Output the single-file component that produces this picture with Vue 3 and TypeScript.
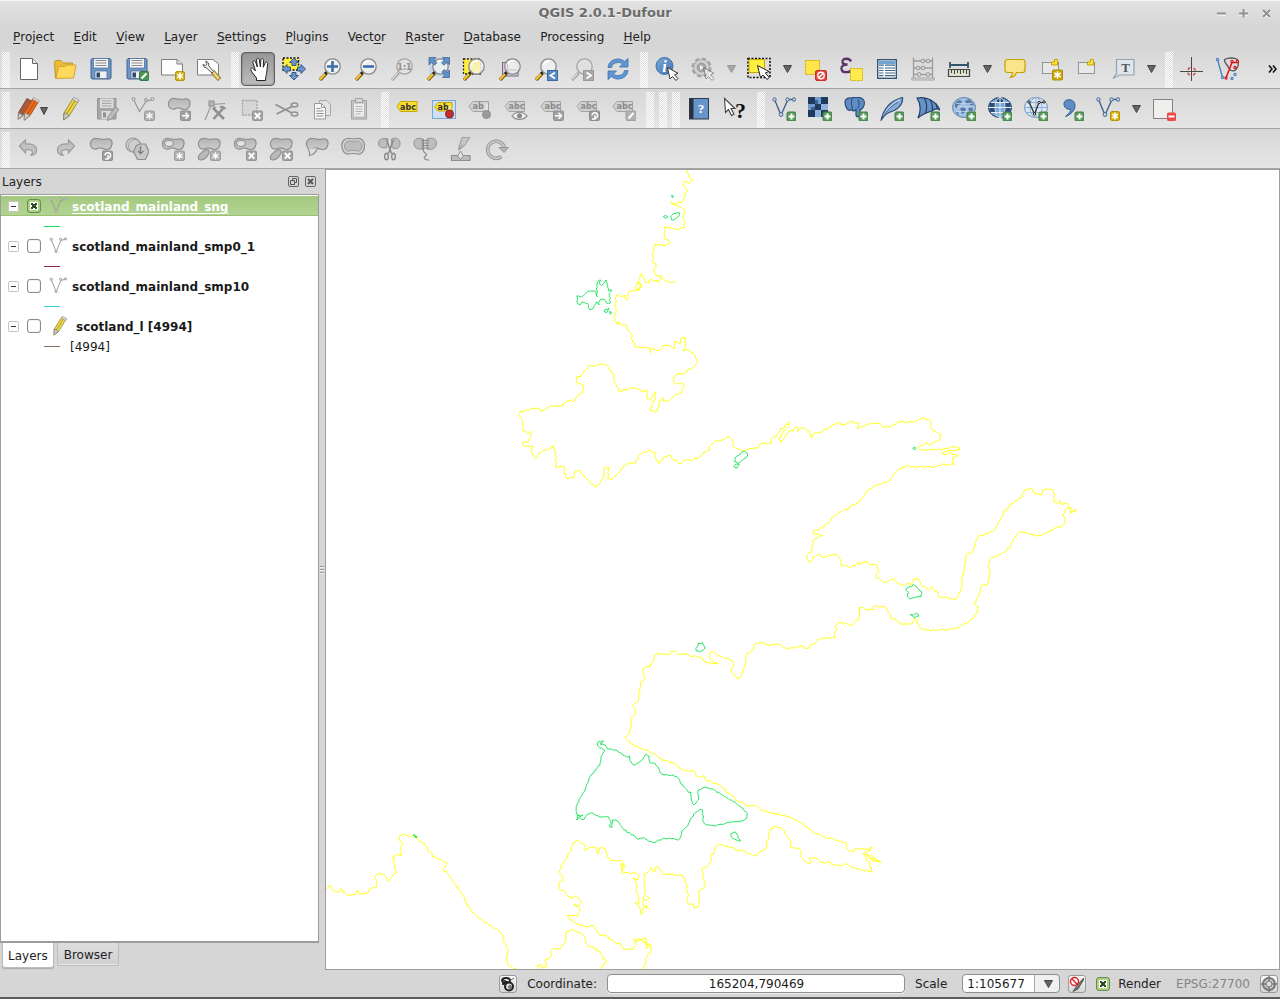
<script setup lang="ts">
import { ref } from 'vue'

interface Tool {
  kind: 'tool' | 'arrow' | 'grip'
  icon?: string
  label?: string
  active?: boolean
  off?: boolean
}

const tool = (icon: string, label: string): Tool => ({ kind: 'tool', icon, label })
const off = (icon: string, label: string): Tool => ({ kind: 'tool', icon, label, off: true })
const arrow = (label: string, disabled = false): Tool => ({ kind: 'arrow', label, off: disabled })
const grip: Tool = { kind: 'grip' }

const menus: [string, string, string][] = [
  ['', 'P', 'roject'],
  ['', 'E', 'dit'],
  ['', 'V', 'iew'],
  ['', 'L', 'ayer'],
  ['', 'S', 'ettings'],
  ['', 'P', 'lugins'],
  ['Vect', 'o', 'r'],
  ['', 'R', 'aster'],
  ['', 'D', 'atabase'],
  ['Processing', '', ''],
  ['', 'H', 'elp'],
]

const bars: { name: string; items: Tool[] }[] = [
  {
    name: 'Navigation',
    items: [
      grip,
      tool('new', 'New'),
      tool('open', 'Open'),
      tool('save', 'Save'),
      tool('save-as', 'Save As'),
      tool('composer', 'New Print Composer'),
      tool('manager', 'Composer Manager'),
      grip,
      { kind: 'tool', icon: 'hand', label: 'Pan Map', active: true },
      tool('pan-sel', 'Pan Map to Selection'),
      tool('zoom-in', 'Zoom In'),
      tool('zoom-out', 'Zoom Out'),
      off('zoom-native', 'Zoom to Native Resolution'),
      tool('zoom-full', 'Zoom Full'),
      tool('zoom-sel', 'Zoom to Selection'),
      tool('zoom-layer', 'Zoom to Layer'),
      tool('zoom-last', 'Zoom Last'),
      off('zoom-next', 'Zoom Next'),
      tool('refresh', 'Refresh'),
      grip,
      tool('identify', 'Identify Features'),
      off('action', 'Run Feature Action'),
      arrow('Feature actions', true),
      tool('select', 'Select Features'),
      arrow('Selection tools'),
      tool('deselect', 'Deselect Features'),
      tool('expression', 'Select by Expression'),
      tool('table', 'Open Attribute Table'),
      off('abacus', 'Field Calculator'),
      tool('measure', 'Measure Line'),
      arrow('Measure tools'),
      tool('tips', 'Map Tips'),
      tool('bookmark-new', 'New Bookmark'),
      tool('bookmark', 'Show Bookmarks'),
      tool('annotation', 'Text Annotation'),
      arrow('Annotation tools'),
      grip,
      tool('crosshair', 'Coordinate Capture'),
      tool('topology', 'Topology Checker'),
    ],
  },
  {
    name: 'Digitizing',
    items: [
      grip,
      { kind: 'tool', icon: 'pencils', label: 'Current Edits' },
      tool('pencil', 'Toggle Editing'),
      off('save-edits', 'Save Layer Edits'),
      off('add-feature', 'Add Feature'),
      off('move-feature', 'Move Feature'),
      off('node', 'Node Tool'),
      off('delete', 'Delete Selected'),
      off('cut', 'Cut Features'),
      off('copy', 'Copy Features'),
      off('paste', 'Paste Features'),
      grip,
      tool('label', 'Labeling'),
      tool('label-pin-on', 'Highlight Pinned Labels'),
      off('label-pin', 'Pin Labels'),
      off('label-show', 'Show Labels'),
      off('label-move', 'Move Label'),
      off('label-rotate', 'Rotate Label'),
      off('label-edit', 'Change Label'),
      grip,
      grip,
      grip,
      tool('book', 'Help Contents'),
      tool('whats', "What's This?"),
      grip,
      tool('add-vector', 'Add Vector Layer'),
      tool('add-raster', 'Add Raster Layer'),
      tool('add-postgis', 'Add PostGIS Layer'),
      tool('add-spatialite', 'Add SpatiaLite Layer'),
      tool('add-mssql', 'Add MSSQL Layer'),
      tool('add-wms', 'Add WMS Layer'),
      tool('add-wcs', 'Add WCS Layer'),
      tool('add-wfs', 'Add WFS Layer'),
      tool('add-csv', 'Add Delimited Text Layer'),
      tool('new-vector', 'New Shapefile Layer'),
      arrow('New layer types'),
      tool('remove', 'Remove Layer'),
    ],
  },
  {
    name: 'Advanced digitizing',
    items: [
      grip,
      off('undo', 'Undo'),
      off('redo', 'Redo'),
      off('rotate-feature', 'Rotate Feature'),
      off('simplify', 'Simplify Feature'),
      off('add-ring', 'Add Ring'),
      off('add-part', 'Add Part'),
      off('delete-ring', 'Delete Ring'),
      off('delete-part', 'Delete Part'),
      off('reshape', 'Reshape Features'),
      off('offset', 'Offset Curve'),
      off('split', 'Split Features'),
      off('merge', 'Merge Features'),
      off('merge-attr', 'Merge Attributes'),
      off('rotate-symbol', 'Rotate Point Symbols'),
    ],
  },
]

const layers = ref([
  { name: 'scotland_mainland_sng', on: true, current: true, icon: 'vector', color: '#17e05a', sub: '' },
  { name: 'scotland_mainland_smp0_1', on: false, current: false, icon: 'vector', color: '#8f2452', sub: '' },
  { name: 'scotland_mainland_smp10', on: false, current: false, icon: 'vector', color: '#3fc9dc', sub: '' },
  { name: 'scotland_l [4994]', on: false, current: false, icon: 'pencil', color: '#8a6a5c', sub: '[4994]' },
])

const render = ref(true)
const coordinate = ref('165204,790469')

/* Survey sheets: each holds digitised lines in thirds of a pixel from its own origin. */
interface Sheet { x: number; y: number; coast: string[]; islands: string[] }

const sheets: Sheet[] = [
  {
    x: 500, y: 165,
    coast: [
      '563,15 566,35 577,43 570,55 552,50 550,62 562,78 555,90 548,105 540,112 525,118 514,110 516,118 535,122 553,133 552,150 548,157 554,165 553,188 542,190 530,195 510,188 492,185 494,222 505,225 510,235 495,242 480,236 463,238 463,258 457,262 458,290 468,295 470,305 460,312 464,326 480,332 486,338 497,348 512,352 526,349',
      '486,330 482,335 478,352 470,345 460,350 450,344 440,354 432,350 430,335 423,325 420,340 412,350 425,368 410,375 405,368 414,352 424,360 408,378 390,378 384,385 382,405 376,402 375,390 362,395 350,390 345,402 350,410 342,425 348,440 343,455 350,475 358,470 352,478 362,478 378,480 380,493 392,503 398,512 393,520 403,533 406,546 422,549 435,546 450,552 452,565 456,552 470,556 488,550 490,540 505,541 515,545 521,553 523,528 533,533 543,535 542,520 553,515 556,545 550,557 562,553 570,560 583,568 587,580 592,592 584,603 570,612 553,625 530,629 519,640 521,652 533,657 545,653 553,660 545,685 525,690 515,700 500,710 490,708 488,698 477,710 473,738 465,742 452,737 455,720 465,706 469,680 458,690 450,706 438,698 442,675 432,680 415,672 400,670 355,680 350,665 343,650 339,625 325,608 320,598 290,600 265,605 250,618 243,635 230,635 228,652 250,660 247,685 230,695 220,710 212,706 195,714 188,724 160,722 140,730 122,738 118,730 92,730 85,738 62,738 56,750 65,760 69,797 82,803 92,798 92,815 85,830 68,833 70,842 90,845 98,843 95,862 107,882 115,870 130,855 150,850 162,840 166,860 168,908 180,903 193,905 192,920 200,940 222,935 225,920 240,916 250,932 270,953 287,966 300,955 313,925 312,908 328,908 322,940 335,943 350,928 370,903 385,895 408,893 415,875 430,862 447,856 465,862 470,885 478,896 490,877 512,872 520,885 530,885 540,897 560,885 577,886 600,875 615,862 628,855 632,840 650,826 670,825 687,815 697,825 703,848 718,852 732,858 745,852 762,850 775,848 790,832 812,836 812,822 830,815 840,798 855,780 868,770 868,782 850,800 838,825 843,833 855,815 868,798 880,798 888,785 893,800 900,790',
    ],
    islands: [
      '230,393 245,395 262,380 285,378 292,395 290,375 292,350 302,345 298,356 305,362 318,345 322,365 325,378 335,375 328,385 330,415 320,415 312,402 300,405 297,420 290,410 280,430 270,435 262,415 245,412 240,420 232,415 230,393',
      '313,435 327,430 320,443 313,440 313,435',
      '328,440 334,441 332,448 328,440',
      '515,90 521,95 517,98 515,90',
      '490,155 497,151 503,156 496,160 490,155',
      '515,165 513,155 520,146 538,143 538,152 530,158 520,165 515,165',
      '703,890 708,875 725,862 733,858 743,870 735,880 715,895 703,890',
      '702,905 710,897 718,898 710,910 702,905',
    ],
  },
  {
    x: 770, y: 400,
    coast: [
      '90,85 100,82 118,92 118,105 126,115 132,100 155,97 175,83 205,68 225,75 240,65 265,68 262,85 280,78 300,70 325,70 345,82 365,78 390,66 420,66 430,66 460,53 480,62 482,85 500,97 514,103 510,120 490,130 480,136 465,128 455,137 445,142 450,148 495,150 530,145 550,140 570,145 568,150 535,152 515,158 520,163 545,160 565,167 548,173 550,183 552,194 520,192 510,197 470,200 430,200 410,198 380,212 368,228 365,236 340,248 320,256 292,270 275,298 245,318 215,336 185,353 178,365 150,387 132,392 130,402 158,407 135,415 127,440 125,455 110,465 113,478 122,487 130,470 150,462 155,472 170,470 185,462 200,464 212,480 212,493 235,500 255,498 265,485 270,495 288,482 300,495 320,495 326,515 318,530 340,547 360,540 373,537 385,550 400,556 412,550 425,555 430,537 447,537 452,553 465,560 475,570 485,560 495,575 505,580 507,592 520,592 550,598 565,590 576,563 577,540 583,505 588,465 608,455 615,435 625,410 650,400 672,392 690,360 700,337 718,318 735,302 757,292 762,272 785,264 790,278 815,285 820,268 845,267 852,280 850,305 862,310 870,300 875,315 890,308 897,325 905,338 920,328 900,340 905,325 890,325 878,345 886,368 875,377 860,382 835,395 800,408 775,400 757,395 740,403 730,420 718,445 690,463 662,475 655,500 660,510 655,545 650,555 633,558 632,570 625,590 613,612 624,620 622,635 608,655 585,670 555,687 520,688 480,691 457,688 445,672 433,655 427,672 405,673 385,668 378,658 363,655 358,638 345,620 313,618 310,630 300,628 268,623 265,660 250,670 245,678 230,672 205,668 195,680 200,690 193,697 195,712 175,716 155,714 140,722 115,745 105,745 100,737 80,742 55,748 40,742 30,732 0,735',
    ],
    islands: [
      '428,145 434,141 438,146 432,149 428,145',
      '407,567 425,560 430,553 442,565 455,575 453,590 435,592 420,597 412,590 415,578 407,567',
      '420,643 430,645 440,640 446,648 435,653 428,648 420,643',
    ],
  },
  {
    x: 540, y: 630,
    coast: [
      '690,45 660,38 645,42 638,60 620,72 612,115 605,130 597,147 585,135 573,122 580,108 578,92 560,84 545,80 530,75 522,66 512,66 510,85 520,95 535,100 515,102 495,95 488,85 470,80 450,78 430,70 425,75 410,70 395,62 390,72 360,72 347,72 340,90 330,110 310,115 308,130 315,145 302,155 300,180 295,212 280,225 288,250 270,265 275,290 268,312 255,320 265,335 300,355 345,373 375,392 405,400 420,415 445,425 462,422 475,440 490,437 500,452 540,465 555,482 580,500 600,515 625,528 640,526 665,540 700,550 745,560 770,573 800,590 820,607 850,620 890,630 920,640 922,657 940,667 950,655 992,658 995,650 990,662 970,672 985,692 998,725 975,722 940,715 920,702 900,707 880,705 865,695 845,698 830,685 808,685 812,700 803,700 785,682 780,658 750,650 750,630 735,610 725,595 700,590 690,605 685,625 678,635 680,655 655,670 650,677 625,672 610,662 590,660 570,652 535,643 525,650 522,672 513,673 512,695 500,712 487,715 490,745 495,770 478,783 475,830 462,835 460,823 445,822 440,805 448,795 442,785 440,765 430,738 400,732 370,733 360,718 350,710 345,725 332,712 325,725 312,732 313,765 315,795 328,805 318,812 310,800 310,825 326,838 318,825 310,835 305,853 300,835 285,818 298,820 295,800 288,780 293,765 280,745 295,750 295,735 270,728 245,728 243,700 255,710 245,722 252,700 240,692 210,690 202,680 195,655 178,655 175,673 168,650 145,655 133,662 135,650 120,635 108,632 98,645 92,665 78,688 62,708 60,730 72,750 55,758 58,775 75,785 90,805 108,797 125,815 112,830 102,822 120,840 113,860 80,855 95,870 110,882 140,890 162,887 180,915 200,917 230,942 240,940 255,960 275,960 290,945 285,930 310,930 315,922 318,945 332,945 330,970 318,985 315,1000 308,1017',
      '970,672 1000,680 1022,697 1005,694 985,680 1012,690',
      '280,925 292,935 300,925 312,938 325,940 318,955 333,950',
      '48,956 60,957 75,935 78,910 95,898 125,910 135,925 145,950 160,950 185,975 200,997 185,1010 183,1020',
    ],
    islands: [
      '468,55 475,40 488,38 495,50 490,60 478,66 468,62 468,55',
      '195,362 175,350 172,338 190,332 180,342 195,345 205,357 225,360 245,370 262,382 268,378 270,392 280,405 300,395 318,372 327,378 330,398 345,400 355,412 362,430 385,436 400,435 415,445 430,470 445,487 453,487 455,512 462,525 475,510 475,480 495,472 520,477 550,497 580,515 605,533 623,550 620,565 610,573 570,577 540,583 520,587 500,585 490,575 488,540 480,538 465,550 450,570 440,590 425,603 422,620 415,630 400,625 370,625 345,637 325,633 310,622 295,628 280,615 260,607 245,590 232,572 218,570 216,592 209,590 212,572 205,560 180,562 155,548 140,555 130,570 118,562 110,570 112,556 128,555 118,560 108,550 108,530 120,505 135,480 150,440 165,420 180,405 183,378 195,362',
      '572,612 585,605 590,612 602,633 590,630 575,622 572,612',
    ],
  },
  {
    x: 326, y: 820,
    coast: [
      '0,207 14,197 22,212 38,215 45,205 52,218 75,225 90,222 92,212 100,222 120,220 133,205 150,203 152,185 145,170 160,160 175,165 187,185 200,165 210,160 205,130 200,108 215,102 227,108 224,85 230,68 220,58 222,45 235,42 250,52 265,45 280,65 297,72 305,92 325,110 350,122 362,128 352,148 372,170 385,190 410,225 425,258 455,290 490,315 515,328 530,347 535,370 543,385 545,435 560,443 572,447',
      '640,447 632,437 645,432 648,442 662,440 655,420 672,413 680,388 690,386',
    ],
    islands: ['263,43 273,52 268,53 263,43 273,50'],
  },
]

/* Adds small vertices between surveyed ones so that the shore keeps its ragged look. */
let seed = 7
function noise(): number {
  seed = (seed * 16807) % 2147483647
  return seed / 2147483647 - 0.5
}
function trace(sheet: Sheet, line: string, rough: number): string {
  const pts = line.split(' ').map((p) => p.split(',').map(Number))
  const out: string[] = []
  pts.forEach(([x, y], i) => {
    if (i > 0) {
      const [px, py] = pts[i - 1]
      const steps = Math.floor(Math.hypot(x - px, y - py) / 5)
      for (let s = 1; s < steps; s++) {
        const t = s / steps
        const jx = px + (x - px) * t + noise() * rough
        const jy = py + (y - py) * t + noise() * rough
        out.push(`${(sheet.x + jx / 3).toFixed(1)},${(sheet.y + jy / 3).toFixed(1)}`)
      }
    }
    out.push(`${(sheet.x + x / 3).toFixed(1)},${(sheet.y + y / 3).toFixed(1)}`)
  })
  return out.join(' ')
}
const coastLines = sheets.flatMap((s) => s.coast.map((l) => trace(s, l, 6)))
const islandLines = sheets.flatMap((s) => s.islands.map((l) => trace(s, l, 4)))
</script>

<template>
  <div class="window">
    <svg class="sprite" aria-hidden="true">
      <defs>
        <linearGradient id="g-blob" x1="0" y1="0" x2="0" y2="1"><stop offset="0" stop-color="#b4b4b4" /><stop offset="1" stop-color="#cdcdcd" /></linearGradient>
        <linearGradient id="g-blue" x1="0" y1="0" x2="1" y2="1"><stop offset="0" stop-color="#7fa8d6" /><stop offset="1" stop-color="#3f74b0" /></linearGradient>

        <!-- badges, drawn in the lower right corner -->
        <symbol id="b-plus" viewBox="0 0 24 24"><rect x="15" y="15" width="9" height="9" rx="1.5" fill="#5a9a5a" stroke="#3f7d45" /><path d="M19.500 16.500v6M16.500 19.500h6" stroke="#fff" stroke-width="2" /></symbol>
        <symbol id="b-star" viewBox="0 0 24 24"><rect x="14.500" y="14.500" width="9" height="9" rx="1.500" fill="#d5b011" stroke="#b8960a" /><path d="M19 15.500v7M16 17.200l6 3.600M22 17.200l-6 3.600" stroke="#fff" stroke-width="1.500" /></symbol>
        <symbol id="b-star-off" viewBox="0 0 24 24"><rect x="13.500" y="14" width="10" height="9.500" rx="1.500" fill="#b0b0b0" stroke="#9d9d9d" /><path d="M18.500 15.200v7M15.500 17l6 3.600M21.500 17l-6 3.600" stroke="#fff" stroke-width="1.300" /></symbol>
        <symbol id="b-x" viewBox="0 0 24 24"><rect x="13.500" y="14" width="10" height="9.500" rx="1" fill="#a4a4a4" stroke="#959595" /><path d="M15.700 16l5.600 5.600M21.300 16l-5.600 5.600" stroke="#fff" stroke-width="1.800" /></symbol>
        <symbol id="b-arrow" viewBox="0 0 24 24"><rect x="13.500" y="14" width="10" height="9.500" rx="1" fill="#a0a0a0" stroke="#929292" /><path d="M15 18.800h6M18.500 15.800l3 3-3 3" fill="none" stroke="#fff" stroke-width="1.500" /></symbol>
        <symbol id="b-turn" viewBox="0 0 24 24"><rect x="13.500" y="14" width="10" height="9.500" rx="1" fill="#9b9b9b" stroke="#8d8d8d" /><path d="M16 18.500a2.800 2.800 0 1 1 3 2.800M19 18v4h-3" fill="none" stroke="#fff" stroke-width="1.400" /></symbol>
        <symbol id="cursor" viewBox="0 0 24 24"><path d="M12.500 10.500l2.500 11.500 2.500-2.500 3.500 4 2-2-3.500-3.700 3.500-1.500z" fill="#fff" stroke="#333" stroke-width="1" /></symbol>

        <symbol id="lens" viewBox="0 0 24 24"><path d="M2 23l6.500-7" stroke="#6b5310" stroke-width="3.400" /><path d="M2 22.500l5.500-6" stroke="#fbc82d" stroke-width="2" /><path d="M7 17l3-3" stroke="#222" stroke-width="2.600" /><circle cx="14.500" cy="9.500" r="7.700" fill="#f1f1f1" fill-opacity=".85" stroke="#8a8a8a" stroke-width="1.300" /><path d="M9.500 8a5.500 5.500 0 0 1 6-4" stroke="#fff" stroke-width="1.500" fill="none" /></symbol>
        <symbol id="lens-off" viewBox="0 0 24 24"><path d="M2 23l6.500-7" stroke="#9b9b9b" stroke-width="3" /><path d="M2 22.500l5.500-6" stroke="#ddd" stroke-width="1.400" /><circle cx="14.500" cy="9.500" r="7.700" fill="#e0e0e0" stroke="#a5a5a5" stroke-width="1.300" /></symbol>
        <symbol id="floppy" viewBox="0 0 24 24"><path d="M3 1.500h18l1 1v18.500l-1 1H3l-1-1V2.500z" fill="#6d97c9" stroke="#3d6391" /><path d="M4.500 1.500h15v9.500h-15z" fill="#f4f4f4" stroke="#47688f" stroke-width=".7" /><path d="M6.500 3.500h11M6.500 6h11M6.500 8.500h11" stroke="#8a8a8a" /><rect x="6" y="14" width="12" height="7.500" fill="#f0f0f0" stroke="#47688f" stroke-width=".7" /><rect x="7.500" y="15.500" width="3.500" height="5" fill="#2d4a70" /></symbol>
        <symbol id="pencil" viewBox="0 0 24 24"><path d="M5 16L14 1.500l5 3L10 19l-5 3.500z" fill="#eed84e" stroke="#9a8c30" /><path d="M7.500 17L16.500 3" stroke="#b19b24" stroke-width="1.200" /><path d="M5 16l-.5 7 5.500-4-2-2.500z" fill="#c9c9c0" stroke="#77746a" stroke-width=".8" /><path d="M13.500 2.300L15 .3l5.200 3-1.300 2z" fill="#e4e4e4" stroke="#8c8c8c" stroke-width=".8" /></symbol>
        <symbol id="vector" viewBox="0 0 24 24"><path d="M3 3.500l6.500 16L16 4.500l6-1.500" fill="none" stroke="#9b9b9b" stroke-width="1.300" /><g fill="#ececec" stroke="#8e8e8e"><circle cx="3" cy="3" r="1.500" /><circle cx="9.500" cy="19.500" r="1.500" /><circle cx="15.500" cy="3" r="1.500" /><circle cx="22" cy="2.500" r="1.500" /></g></symbol>
        <symbol id="vector-blue" viewBox="0 0 24 24"><path d="M2.500 2.500l6.500 15.500 7-15.500h6.500" fill="none" stroke="#44638b" stroke-width="1.400" /><g fill="#c5daf0" stroke="#44638b"><circle cx="2.500" cy="2.500" r="1.700" /><circle cx="9" cy="17.500" r="1.900" /><circle cx="15.500" cy="2.500" r="1.700" /><circle cx="22" cy="2.500" r="1.700" /></g></symbol>
        <symbol id="blob" viewBox="0 0 24 24"><path d="M1.500 7.500C1 3 4.500 1 8 1.500c4 .6 5 1.500 9 .5 4-1 6.500 1.500 6 5-.4 3.500-2.500 6-6 5.500-3-.4-4-2-7-1.500-2 .4-2.500 1.500-4.500 1C3 11.500 1.700 10 1.500 7.500z" fill="url(#g-blob)" stroke="#8f8f8f" stroke-width="1.200" /></symbol>
        <symbol id="tag" viewBox="0 0 24 24"><path d="M1 7.500L5 2.500h15.500v10H5z" fill="#d2d2d2" stroke="#a2a2a2" /></symbol>

        <symbol id="new" viewBox="0 0 24 24"><path d="M3.500 1.500h12l5 5v16h-17z" fill="#fff" stroke="#666" /><path d="M15.500 1.500v5h5" fill="#e6e6e6" stroke="#666" /></symbol>
        <symbol id="open" viewBox="0 0 24 24"><path d="M2.500 21.500L1.500 4.500l1-1H8l2 2.500h9.500v3" fill="#e9bd35" stroke="#c4952a" /><path d="M3 21.500L5.500 9.500H12l1.500-1.500h9.500L20.500 21z" fill="#ffd95b" stroke="#d3a233" /></symbol>
        <symbol id="save" viewBox="0 0 24 24"><use href="#floppy" /></symbol>
        <symbol id="save-as" viewBox="0 0 24 24"><use href="#floppy" /><rect x="14.500" y="14.500" width="9.500" height="9" rx="1.500" fill="#4c9553" stroke="#397a40" /><path d="M16.500 21.500l5-5" stroke="#fff" stroke-width="2.200" /></symbol>
        <symbol id="composer" viewBox="0 0 24 24"><path d="M.5 2.500H16l5.500 4.500v11H.5z" fill="#fdfdfd" stroke="#7d7d7d" /><path d="M16 2.500V7h5.500" fill="#e5e5e5" stroke="#7d7d7d" /><use href="#b-star" /></symbol>
        <symbol id="manager" viewBox="0 0 24 24"><path d="M.5 2.500H16l5.500 4.500v11H.5z" fill="#fdfdfd" stroke="#7d7d7d" /><path d="M15.500 14.500l7 8" stroke="#80681c" stroke-width="4.500" /><path d="M15.500 14.500l6.500 7.500" stroke="#ecd27a" stroke-width="2.800" /><path d="M9 10.500l6 5.500 1.500-1.500-5-6c.8-2-.5-4-3-4l1.500 2.500-1.500 1.500L6 7.500c0 2 1.500 3.200 3 3z" fill="#eee" stroke="#444" stroke-width=".9" /></symbol>
        <symbol id="hand" viewBox="0 0 24 24"><path d="M10.500 23.500v-2.500L6.500 16 4.800 12.800C4.300 10.800 6.300 10.500 7.500 12l2 2L7 5.800C6.500 3.600 9 3 9.600 5l1.700 5L10.600 3c-.2-2.200 2.500-2.400 2.800-.2l.9 7L14.900 3c.2-2 2.600-1.800 2.600.2l-.2 7.100L19 6.200c.6-1.800 2.900-1.300 2.600.6L20.900 14c-.3 3.500-1.400 5-1.400 9.500z" fill="#fff" stroke="#222" stroke-width="1" /></symbol>
        <symbol id="pan-sel" viewBox="0 0 24 24"><rect x="1" y="1" width="15.500" height="12" fill="#ffef3a" stroke="#111" stroke-width="1.400" stroke-dasharray="2 1.500" /><path d="M12 1l4.500 4.500H14v3h-4v-3H7.500zM12 23l4.500-4.500H14v-3h-4v3H7.500zM.5 12L5 7.500V10h3.500v4H5v2.500zM23.500 12L19 7.500V10h-3.500v4H19v2.500z" fill="#6c96cb" stroke="#284f80" stroke-width=".9" /></symbol>
        <symbol id="zoom-in" viewBox="0 0 24 24"><use href="#lens" /><path d="M14.500 4v11M9 9.500h11" stroke="#3e6ea8" stroke-width="2.600" /></symbol>
        <symbol id="zoom-out" viewBox="0 0 24 24"><use href="#lens" /><path d="M9 9.500h11" stroke="#3e6ea8" stroke-width="2.600" /></symbol>
        <symbol id="zoom-native" viewBox="0 0 24 24"><use href="#lens-off" /><text x="14.500" y="12.500" class="tiny" text-anchor="middle" fill="#8f8f8f">1:1</text></symbol>
        <symbol id="zoom-full" viewBox="0 0 24 24"><rect x="3.500" y="1" width="19.500" height="18.500" fill="#c4d5e8" /><use href="#lens" /><path d="M3 .5h7L8 2.800l3 3-2.500 2.500-3-3L3 8zM23.500.500h-7L18.500 2.800l-3 3L18 8.300l3-3 2.500 2.500zM23.500 20.500h-7l2.300-2.500-3-3 2.500-2.500 3 3 2.200-2.500z" fill="#5e8fc6" stroke="#34608f" stroke-width=".7" /></symbol>
        <symbol id="zoom-sel" viewBox="0 0 24 24"><rect x="1.500" y="2" width="17" height="15" fill="#ffee3d" stroke="#222" stroke-width="1.300" stroke-dasharray="2 1.500" /><use href="#lens" /><rect x="11" y="5" width="7" height="9" fill="#fbf3a0" opacity=".8" /></symbol>
        <symbol id="zoom-layer" viewBox="0 0 24 24"><rect x="4.500" y="5.500" width="15.500" height="13.500" fill="#d7c8dc" stroke="#7d6a86" /><use href="#lens" /><path d="M9.500 6.500v6.500h9" fill="none" stroke="#c8b8ce" /></symbol>
        <symbol id="zoom-last" viewBox="0 0 24 24"><use href="#lens" /><rect x="13.500" y="13.500" width="10" height="10" fill="#5b8bc4" stroke="#3c699f" /><path d="M21 15.500l-4.500 3 4.500 3" fill="none" stroke="#fff" stroke-width="1.800" /></symbol>
        <symbol id="zoom-next" viewBox="0 0 24 24"><use href="#lens-off" /><rect x="13.500" y="13.500" width="10" height="10" fill="#a8a8a8" stroke="#999" /><path d="M16.500 15.500l4.500 3-4.500 3" fill="none" stroke="#fff" stroke-width="1.800" /></symbol>
        <symbol id="refresh" viewBox="0 0 24 24"><path d="M2 10.500C2.500 5 7 2 12 2c3 0 5 1 6.500 2.500L22 1.500V10h-8.500l3-3C15.500 6 14 5.500 12 5.500c-3.500 0-6 2-6.500 5z" fill="#5f95d2" stroke="#3a71ad" stroke-width=".8" /><path d="M22 13.500C21.500 19 17 22 12 22c-3 0-5-1-6.500-2.500L2 22.500V14h8.500l-3 3c1 1 2.500 1.500 4.500 1.500 3.500 0 6-2 6.500-5z" fill="#5f95d2" stroke="#3a71ad" stroke-width=".8" /></symbol>
        <symbol id="identify" viewBox="0 0 24 24"><circle cx="9.500" cy="9" r="8.500" fill="url(#g-blue)" stroke="#3e73ae" /><text x="9.500" y="14.500" class="serif-i" text-anchor="middle" fill="#fff">i</text><use href="#cursor" /></symbol>
        <symbol id="action" viewBox="0 0 24 24"><circle cx="10.500" cy="10.500" r="8.800" fill="none" stroke="#a3a3a3" stroke-width="2.600" stroke-dasharray="4.500 2.400" /><circle cx="10.500" cy="10.500" r="7.800" fill="#d3d3d3" stroke="#a6a6a6" /><circle cx="10.500" cy="10.500" r="4.500" fill="#a8a8a8" stroke="#999" /><path d="M9 8l4 2.500L9 13z" fill="#eee" /><g opacity=".45"><use href="#cursor" /></g></symbol>
        <symbol id="select" viewBox="0 0 24 24"><rect x="1" y="1.500" width="22" height="19" fill="#dedede" stroke="#111" stroke-width="1.600" stroke-dasharray="2 1.500" /><path d="M2 2.500h15.500v13H2z" fill="#ffef3e" stroke="#c9a500" /><path d="M10.500 8.500l3 12 2.500-2.500 4 4.500 2.300-2-4-4.500 3.700-1.500z" fill="#fff" stroke="#222" /></symbol>
        <symbol id="deselect" viewBox="0 0 24 24"><rect x="2.500" y="3.500" width="14" height="14" fill="#ffe64b" stroke="#d2a800" stroke-dasharray="2 1" /><rect x="12.500" y="13.500" width="11" height="10" rx="1.500" fill="#e8433f" stroke="#c92d2d" /><circle cx="18" cy="18.500" r="3.200" fill="none" stroke="#fff" stroke-width="1.400" /><path d="M16 20.500l4-4" stroke="#fff" stroke-width="1.400" /></symbol>
        <symbol id="expression" viewBox="0 0 24 24"><path d="M12 4.500C10.500.500 3 1 3.500 5c.3 2 2.500 2.700 5 2.500C4.500 7.500 2 9 2.500 12c.6 4.500 9 4 10.500 0" fill="none" stroke="#5a3365" stroke-width="2.300" /><rect x="11.500" y="11.500" width="12" height="12" fill="#ffeb4e" stroke="#d7b000" stroke-dasharray="2 1" /></symbol>
        <symbol id="table" viewBox="0 0 24 24"><rect x="2.700" y="2.700" width="18.600" height="18.600" fill="#fff" stroke="#35546f" stroke-width="1.400" /><path d="M3.500 4h17v3h-17z" fill="#6fa5d6" /><path d="M4 8.200h5M10 8.200h10M4 11h4.500M10 11h10M4 13.500h4.500M10 13.500h10M4 16h4.500M10 16h10M4 18.700h4.500M10 18.700h10" stroke="#3f6689" stroke-width="1.200" /></symbol>
        <symbol id="abacus" viewBox="0 0 24 24"><path d="M2.500.5v21M21.500.5v21M2.500 4h19M2.500 11h19M2.500 17.500h19" stroke="#9c9c9c" fill="none" stroke-width="1.300" /><path d="M.8 21h22.400v2H.8z" fill="#ddd" stroke="#a2a2a2" /><g fill="#d7d7d7" stroke="#979797"><circle cx="12" cy="4" r="1.900" /><circle cx="17" cy="4" r="1.900" /><circle cx="7" cy="11" r="1.900" /><circle cx="12" cy="11" r="1.900" /><circle cx="8" cy="17.500" r="1.900" /><circle cx="17" cy="17.500" r="1.900" /></g></symbol>
        <symbol id="measure" viewBox="0 0 24 24"><path d="M3 8h18M3 5v6M21 5v6" stroke="#33536f" stroke-width="1.800" /><path d="M1.500 12.500h21v7h-21z" fill="#dedfca" stroke="#444" stroke-width="1.200" /><path d="M4.500 13v3M7.500 13v4M10.500 13v3M13.500 13v4M16.500 13v3M19.500 13v4" stroke="#444" /></symbol>
        <symbol id="tips" viewBox="0 0 24 24"><path d="M4.500 2.500h15q2.500 0 2.500 2.500v8q0 2.500-2.500 2.500h-6c-1 3-3 4.500-6 5 1.500-1.500 2-3 2-5h-5Q2 15.500 2 13V5q0-2.500 2.500-2.500z" fill="#f9e68c" stroke="#c9a002" stroke-width="1.200" /></symbol>
        <symbol id="bookmark" viewBox="0 0 24 24"><rect x="3.500" y="5.500" width="16" height="11" fill="#e8e8e8" stroke="#444" stroke-dasharray="1 1" /><path d="M12.500 5V8h6V2.500h-3V5z" fill="#ffe03c" stroke="#c9a100" /></symbol>
        <symbol id="bookmark-new" viewBox="0 0 24 24"><use href="#bookmark" /><rect x="13.500" y="13" width="10" height="10" rx="1" fill="#cba60b" stroke="#b08e00" /><path d="M18.500 14.300v7.400M15.300 16l6.400 4M21.700 16l-6.400 4" stroke="#fff" stroke-width="1.500" /></symbol>
        <symbol id="annotation" viewBox="0 0 24 24"><path d="M5.500 2.500H23v15.500H8.500L2 21.500l3.500-5z" fill="#dde5ee" stroke="#9aa0a8" stroke-width="1.200" /><text x="14.500" y="14.500" class="serif-t" text-anchor="middle" fill="#555">T</text></symbol>
        <symbol id="crosshair" viewBox="0 0 24 24"><path d="M11.500 0v24M0 14.500h23" stroke="#4a4a45" /><circle cx="11.500" cy="14.500" r="4" fill="none" stroke="#c33" stroke-width="1.300" stroke-dasharray="3 3.280" stroke-dashoffset="4.640" /></symbol>
        <symbol id="topology" viewBox="0 0 24 24"><path d="M1.500 2.500l5 18" stroke="#4a82c3" stroke-width="1.400" /><path d="M8.500 2.500c4-2 10-2 13 0 1.500 4 .5 8-1.500 10-3 2.500-6 1.500-7.500-2S8 6 8.500 2.500z" fill="none" stroke="#555" stroke-width="1.300" /><path d="M10 21l6-15.500h5" fill="none" stroke="#d11" stroke-width="1.500" /><g fill="#e8e8e8" stroke-width="1.200"><g stroke="#d11"><circle cx="10" cy="21" r="1.100" /><circle cx="16" cy="4.500" r="1.100" /><circle cx="21.500" cy="4.500" r="1.100" /><circle cx="19" cy="10.500" r="1.100" /></g><g stroke="#4a82c3"><circle cx="1.500" cy="2.500" r="1.100" /><circle cx="6.500" cy="20.500" r="1.100" /><circle cx="19" cy="17.500" r="1.100" /><circle cx="16" cy="21.500" r="1.100" /></g></g></symbol>

        <symbol id="pencils" viewBox="0 0 24 24"><path d="M2.500 15.500L11 1.500l4.500 2.500L7 18.500l-4 3.500z" fill="#a95a3b" stroke="#82503a" /><path d="M2.500 15.500l-.5 7 5-4z" fill="#cfcac4" stroke="#777" stroke-width=".8" /><path d="M8.500 15.500L17 1.500l5.500 3L14 18.500l-5 4z" fill="#e96a1c" stroke="#ab5223" /><path d="M11.500 17L20 3" stroke="#b94a10" /><path d="M8.500 15.500l-.5 8 6-5z" fill="#cfcac4" stroke="#777" stroke-width=".8" /><path d="M16.500 2l1-1.500 5.800 3.200-1 1.800z" fill="#e0e0e0" stroke="#999" stroke-width=".7" /></symbol>
        <symbol id="save-edits" viewBox="0 0 24 24"><path d="M2.500 1.500h18.500V22H2.500z" fill="#a7a7a7" stroke="#959595" /><path d="M5 1.500h13.500v9.500H5z" fill="#dcdcdc" /><path d="M7 4h9.500M7 6.500h9.500M7 9h9.500" stroke="#a5a5a5" /><rect x="6.500" y="14" width="10" height="8" fill="#dcdcdc" /><rect x="8" y="15.500" width="3" height="5" fill="#929292" /><path d="M13 19.500l7.500-9.500 3.500 2.500-7.500 9.500-4 1.500z" fill="#bdbdbd" stroke="#929292" /></symbol>
        <symbol id="add-feature" viewBox="0 0 24 24"><path d="M2.500 2.500l6 12 6.500-10 6.500-2" fill="none" stroke="#999" stroke-width="1.300" /><g fill="#ddd" stroke="#949494"><circle cx="2.500" cy="2" r="1.500" /><circle cx="15" cy="3" r="1.500" /><circle cx="21.500" cy="2" r="1.500" /></g><use href="#b-star-off" /></symbol>
        <symbol id="move-feature" viewBox="0 0 24 24"><use href="#blob" /><use href="#b-arrow" /></symbol>
        <symbol id="node" viewBox="0 0 24 24"><path d="M2 23L8.500 7.500 22 6.500" fill="none" stroke="#999" stroke-width="1.200" /><rect x="6" y="4" width="5" height="5" fill="#b5b5b5" stroke="#8e8e8e" /><path d="M11 12l10 10M20.500 11L10.500 22" stroke="#909090" stroke-width="2.600" /><path d="M17 10.500c2-1.500 4-.5 5.500 1.500M9.500 12.500l3-2.500" stroke="#909090" stroke-width="2" fill="none" /></symbol>
        <symbol id="delete" viewBox="0 0 24 24"><rect x="3.500" y="3.500" width="14.500" height="14.500" fill="#d6d6d6" stroke="#a5a5a5" stroke-width="1.300" stroke-dasharray="2 1" /><use href="#b-x" /></symbol>
        <symbol id="cut" viewBox="0 0 24 24"><path d="M.5 7.500L17 16M1.500 17L18 9" stroke="#909090" stroke-width="1.700" /><ellipse cx="19.500" cy="8" rx="3.200" ry="2" fill="none" stroke="#909090" stroke-width="1.500" /><ellipse cx="19.500" cy="17" rx="3.200" ry="2" fill="none" stroke="#909090" stroke-width="1.500" /></symbol>
        <symbol id="copy" viewBox="0 0 24 24"><path d="M8.500 3.500h7l4 4v11h-11z" fill="#e3e3e3" stroke="#a7a7a7" /><path d="M3.500 6.500h7l4 4v11.500h-11z" fill="#f6f6f6" stroke="#9a9a9a" /><path d="M10.500 6.500v4h4" fill="none" stroke="#9a9a9a" /><path d="M5.500 11.500h4M5.500 14h7M5.500 16.500h7M5.500 19h7" stroke="#909090" /></symbol>
        <symbol id="paste" viewBox="0 0 24 24"><rect x="4.500" y="3.500" width="15" height="18.500" fill="#c6c6c6" stroke="#a2a2a2" /><rect x="6.500" y="6" width="11" height="14" fill="#eee" stroke="#b5b5b5" /><path d="M8.500 1.500h7v4h-7z" fill="#d4d4d4" stroke="#a2a2a2" /><path d="M8.500 9.500h7M8.500 12h7M8.500 14.500h7M8.500 17h5" stroke="#b0b0b0" /></symbol>
        <symbol id="label" viewBox="0 0 24 24"><path d="M1 9.500L4.500 4.500h16.500v10H4.500z" fill="#f8de2c" stroke="#c9a70a" /><text x="12" y="12.500" class="tiny" text-anchor="middle" fill="#333">abc</text></symbol>
        <symbol id="label-pin-on" viewBox="0 0 24 24"><rect x=".5" y="3.500" width="23" height="18" fill="#cfe0f2" stroke="#7ba6d8" /><path d="M2.500 10L6 5.500h14v8.500H6z" fill="#f8de2c" stroke="#c9a70a" /><text x="5.500" y="12.500" class="tiny" fill="#333">ab</text><path d="M17.500 9.500v7" stroke="#eee" stroke-width="2" /><circle cx="17.500" cy="17" r="4" fill="#bd2f2f" stroke="#8e2222" /></symbol>
        <symbol id="label-pin" viewBox="0 0 24 24"><use href="#tag" y="2" /><text x="4.500" y="12" class="tiny" fill="#8a8a8a">ab</text><path d="M18.500 7v9" stroke="#e8e8e8" stroke-width="2" /><circle cx="18.500" cy="17.500" r="4" fill="#9b9b9b" stroke="#8c8c8c" /></symbol>
        <symbol id="label-show" viewBox="0 0 24 24"><use href="#tag" y="2" /><text x="12.500" y="12" class="tiny" text-anchor="middle" fill="#8a8a8a">abc</text><path d="M8 19c4-5 11-5 15 0-4 4.500-11 4.500-15 0z" fill="#eee" stroke="#8a8a8a" stroke-width="1.200" /><circle cx="15.500" cy="18.800" r="2.500" fill="#8a8a8a" /></symbol>
        <symbol id="label-move" viewBox="0 0 24 24"><use href="#tag" y="2" /><text x="12.500" y="12" class="tiny" text-anchor="middle" fill="#8a8a8a">abc</text><use href="#b-arrow" /></symbol>
        <symbol id="label-rotate" viewBox="0 0 24 24"><use href="#tag" y="2" /><text x="12.500" y="12" class="tiny" text-anchor="middle" fill="#8a8a8a">abc</text><use href="#b-turn" /></symbol>
        <symbol id="label-edit" viewBox="0 0 24 24"><use href="#tag" y="2" /><text x="12.500" y="12" class="tiny" text-anchor="middle" fill="#8a8a8a">abc</text><rect x="14" y="14" width="10" height="9.500" rx="1" fill="#b2b2b2" stroke="#a0a0a0" /><path d="M16.500 21.500l5-5.500" stroke="#fff" stroke-width="2" /></symbol>
        <symbol id="book" viewBox="0 0 24 24"><rect x="2.500" y="1.500" width="19" height="20.500" fill="#6895c9" stroke="#2f3c50" /><path d="M2.500 1.500H6.500V22h-4z" fill="#28323f" /><text x="14" y="16" class="serif-t" text-anchor="middle" fill="#fff">?</text></symbol>
        <symbol id="whats" viewBox="0 0 24 24"><path d="M1.500 1.500l1 14 3-3 3 6 2.500-1.200-3-5.800h4z" fill="#fff" stroke="#444" stroke-width="1.100" /><text x="17.500" y="20.500" class="ask" text-anchor="middle" fill="#111">?</text></symbol>
        <symbol id="add-vector" viewBox="0 0 24 24"><use href="#vector-blue" /><use href="#b-plus" /></symbol>
        <symbol id="add-raster" viewBox="0 0 24 24"><rect x="0" y="0" width="20" height="20" fill="#6f9bcf" /><path d="M0 0h7v7H0zM13 0h7v7h-7zM7 7h6v6H7zM0 13h7v7H0zM13 13h7v7h-7z" fill="#203a5e" /><path d="M13 7h7v6h-7zM7 13h6v7H7z" fill="#8fb3dd" /><path d="M7 3h3v4H7zM3 13h4v-3H3z" fill="#3c6496" /><use href="#b-plus" /></symbol>
        <symbol id="add-postgis" viewBox="0 0 24 24"><path d="M1 5c0-3 3-4.500 6-4 3-1 9-1 11 .5 2.500 1.500 3 5 1.500 8-.7 1.500-2 3-3.500 3v5c0 3-4 3-4 0v-5l-2 1.500c-2 0-2-1-2-2-1.500 2-4 2-5.500-1S1 8 1 5z" fill="#5f8cc2" stroke="#27497a" stroke-width="1.200" /><path d="M8 2c-1 3-1 6 .5 9M14 2.500c1.500 3 1.500 6 0 8.500" fill="none" stroke="#27497a" /><use href="#b-plus" /></symbol>
        <symbol id="add-spatialite" viewBox="0 0 24 24"><path d="M1 23.500C3 14 9 4 22.500.5 23 6 20 12 9 15.500c-4 2-6 4.500-8 8z" fill="#86abd9" stroke="#2e5078" stroke-width="1.200" /><path d="M3 19C7 12 13 6 20 2.500" stroke="#dce8f5" fill="none" /><path d="M1 23.500C5 15 10 10 18 5" stroke="#2e5078" fill="none" stroke-width=".8" /><use href="#b-plus" /></symbol>
        <symbol id="add-mssql" viewBox="0 0 24 24"><path d="M1 1c8-1.500 18 1.500 23 12-3-2-6-1-8 1-5 1.500-10 3-14 7C5 15 5 7 1 1z" fill="#6792c6" stroke="#1f3f66" stroke-width="1.200" /><path d="M8 1c3 4 3.500 9 1.500 15.500M14 3c2.500 3.500 3 7 2 11M19.500 6c1.200 2 1.700 4 1.500 6" fill="none" stroke="#1f3f66" stroke-width="1.200" /><use href="#b-plus" /></symbol>
        <symbol id="add-wms" viewBox="0 0 24 24"><ellipse cx="12" cy="10.500" rx="11.500" ry="10" fill="#a3c1e4" stroke="#5e82ab" /><path d="M3 6l4-3 3 1-1 3-3 1-1 3-2-1zM13 4l4-2 3 3 2 3-3 .5-2-2-3 1zM8 11l4-1 2 2-2 4-2 1zM16 11l4-1 1 3-3 3zM4 14l2 1 1 3-2-1z" fill="#567ba8" /><path d="M5 10h15M4 6.500h16M4 14.500h16" stroke="#cfe0f2" stroke-width=".7" /><use href="#b-plus" /></symbol>
        <symbol id="add-wcs" viewBox="0 0 24 24"><ellipse cx="12" cy="10.500" rx="11.500" ry="10" fill="#7ba6d8" stroke="#1f3a5c" /><path d="M1.500 6h6.500v9H1.500zM16 6h6.500v9H16zM8 .8h8V6H8z" fill="#2c4f7e" /><path d="M.5 10.500h23M3 5.500h18M3 15.500h18" stroke="#e3edf7" /><ellipse cx="12" cy="10.500" rx="5" ry="10" fill="none" stroke="#e3edf7" /><path d="M12 .5v20" stroke="#e3edf7" /><use href="#b-plus" /></symbol>
        <symbol id="add-wfs" viewBox="0 0 24 24"><ellipse cx="12" cy="10.500" rx="11.500" ry="10" fill="#dce7f3" stroke="#6b95c6" /><path d="M.5 10.500h23M3 5.500h18M3 15.500h18M12 .5v20" stroke="#8fb0d6" /><ellipse cx="12" cy="10.500" rx="6" ry="10" fill="none" stroke="#8fb0d6" /><path d="M5 5l5.500 12L15 5.500h5" fill="none" stroke="#222" stroke-width="1.200" /><g fill="#fff" stroke="#222"><circle cx="5" cy="5" r="1.200" /><circle cx="10.500" cy="17" r="1.200" /><circle cx="15" cy="5.500" r="1.200" /><circle cx="20" cy="5" r="1.200" /></g><use href="#b-plus" /></symbol>
        <symbol id="add-csv" viewBox="0 0 24 24"><path d="M4 7c0-6 11-6 11 1.500 0 5-4 9-9.500 11C9 16.500 11 14 10.500 12 7 13 4 10.500 4 7z" fill="#5d8dc6" stroke="#315a8e" /><use href="#b-plus" /></symbol>
        <symbol id="new-vector" viewBox="0 0 24 24"><use href="#vector-blue" /><use href="#b-star" /></symbol>
        <symbol id="remove" viewBox="0 0 24 24"><rect x="1.500" y="2.500" width="19" height="19" fill="#efefed" stroke="#838380" /><rect x="15" y="15.500" width="9" height="8.500" rx="1.500" fill="#ee4b48" /><path d="M16.500 19.500h6" stroke="#fff" stroke-width="2" /></symbol>

        <symbol id="undo" viewBox="0 0 24 24"><path d="M2.500 9l6-6v4c6-.5 11.500 1 11 7-.3 2.500-2.500 4-6 4.500 2-1.500 2.500-3 1.500-4.500-.8-1.200-2.500-1.500-6.500-1.300V16z" fill="#c2c2c2" stroke="#9b9b9b" stroke-width="1.200" /></symbol>
        <symbol id="redo" viewBox="0 0 24 24"><path d="M21.500 9l-6-6v4c-6-.5-11.500 1-11 7 .3 2.500 2.500 4 6 4.500-2-1.500-2.500-3-1.500-4.500.8-1.200 2.500-1.500 6.500-1.300V16z" fill="#c2c2c2" stroke="#9b9b9b" stroke-width="1.200" /></symbol>
        <symbol id="rotate-feature" viewBox="0 0 24 24"><use href="#blob" /><use href="#b-turn" /></symbol>
        <symbol id="simplify" viewBox="0 0 24 24"><circle cx="8" cy="8" r="7" fill="#cfcfcf" stroke="#979797" stroke-width="1.200" /><circle cx="10" cy="9" r="6.500" fill="none" stroke="#a5a5a5" /><path d="M15 7h5.500l3.500 7.500-3.500 8h-8l-4-8 3-6z" fill="#c4c4c4" fill-opacity=".85" stroke="#8f8f8f" stroke-width="1.200" /><path d="M15.500 9.500v7M13 14l2.700 2.700L18.500 14" fill="none" stroke="#777" stroke-width="1.200" /></symbol>
        <symbol id="add-ring" viewBox="0 0 24 24"><use href="#blob" /><ellipse cx="8" cy="6.500" rx="4.500" ry="3" fill="#e3e3e3" stroke="#8f8f8f" stroke-width="1.200" /><use href="#b-star-off" /></symbol>
        <symbol id="delete-ring" viewBox="0 0 24 24"><use href="#blob" /><ellipse cx="8" cy="6.500" rx="4.500" ry="3" fill="#e3e3e3" stroke="#8f8f8f" stroke-width="1.200" /><use href="#b-x" /></symbol>
        <symbol id="part" viewBox="0 0 24 24"><use href="#blob" /><path d="M8.500 13c3-1.500 4.500 1 3 4s-4.500 6-8 6c-2.500 0-3-3-1-5.500s3.500-3.500 6-4.500z" fill="#bababa" stroke="#8f8f8f" stroke-width="1.200" /></symbol>
        <symbol id="add-part" viewBox="0 0 24 24"><use href="#part" /><use href="#b-star-off" /></symbol>
        <symbol id="delete-part" viewBox="0 0 24 24"><use href="#part" /><use href="#b-x" /></symbol>
        <symbol id="reshape" viewBox="0 0 24 24"><use href="#blob" /><path d="M3 11.500c1 1.500 2 4 1.500 7 3-.5 6-2.500 8-7" fill="#dedede" stroke="#8f8f8f" stroke-width="1.200" /></symbol>
        <symbol id="offset" viewBox="0 0 24 24"><path d="M.8 9C.5 3.500 5 .5 9 1.500c2.500.6 4 .6 6.500 0C20 .500 23.500 4 23.500 9s-3 8.500-7 8-5-1-8.500 0S1 14 .8 9z" fill="#d5d5d5" stroke="#8f8f8f" stroke-width="1.200" /><path d="M3.500 9c0-3.500 3-5.500 5.500-5 3 .6 4 .5 6.500 0 3-.5 5.500 1.500 5.500 5s-2 5.500-4.500 5c-3-.5-5-1-8 0-3 .7-5-2-5-5z" fill="#bdbdbd" stroke="#9b9b9b" /></symbol>
        <symbol id="split" viewBox="0 0 24 24"><path d="M1.500 7C1 2.500 5 .5 11 2L9.500 11C6 10.500 2 11.500 1.500 7zM14.500 2c5-2 8.500 0 8.500 4.500 0 5-4 6.500-8 4z" fill="#bdbdbd" stroke="#939393" /><path d="M9.500 2.500l5 14M16.500 2.500l-5 14" stroke="#8b8b8b" stroke-width="1.500" /><ellipse cx="9.500" cy="19.500" rx="1.800" ry="3.200" fill="none" stroke="#888" stroke-width="1.400" /><ellipse cx="16.500" cy="19.500" rx="1.800" ry="3.200" fill="none" stroke="#888" stroke-width="1.400" /></symbol>
        <symbol id="merge" viewBox="0 0 24 24"><path d="M1 6C1 1.500 5 .5 10 2v10C5 13 1 11 1 6zM14 2c5-2 9.500-.5 9.500 4 0 5-4 7.500-9.500 6z" fill="#bdbdbd" stroke="#939393" /><path d="M8.500 3.500h7.500M8.500 6h7.500M8.500 8.500h7.500M8.500 11h7.500M10.500 2v12c0 2 4 2 3 4s-3 1.500-2 3.500 4 1 4.500 2" fill="none" stroke="#8b8b8b" stroke-width="1.200" /></symbol>
        <symbol id="merge-attr" viewBox="0 0 24 24"><path d="M13 .5L21 0l-5 8-4 3.500-2.500 1.500.5-3z" fill="#c6c6c6" stroke="#999" /><path d="M9.500 13l4-5.500" stroke="#999" /><path d="M2.500 18.500h18.500v5H2.500z" fill="#bbb" stroke="#8f8f8f" stroke-width="1.200" /><path d="M11.500 14l3 5-3 3.500-3-3.500z" fill="#e2e2e2" stroke="#8f8f8f" /></symbol>
        <symbol id="rotate-symbol" viewBox="0 0 24 24"><path d="M16.500 19.500A8.500 8.500 0 1 1 19.500 11" fill="none" stroke="#959595" stroke-width="3.600" /><path d="M16.500 19.500A8.500 8.500 0 1 1 19.500 11" fill="none" stroke="#c6c6c6" stroke-width="1.800" /><path d="M14 10.500h9.500l-4.500 5z" fill="#b5b5b5" stroke="#959595" /></symbol>
      </defs>
    </svg>

    <header class="titlebar">
      <h1>QGIS 2.0.1-Dufour</h1>
      <div class="winbtns">
        <button type="button" aria-label="Minimize"><svg width="9" height="9"><path d="M0 5.500h9" stroke="#fff" stroke-width="2" /><path d="M0 4.500h9" stroke="#909090" stroke-width="2" /></svg></button>
        <button type="button" aria-label="Maximize"><svg width="9" height="9"><path d="M0 5.500h9M4.500 1v8" stroke="#fff" stroke-width="2" /><path d="M0 4.500h9M4.500 0v8.500" stroke="#909090" stroke-width="2" /></svg></button>
        <button type="button" aria-label="Close"><svg width="9" height="9"><path d="M1 2l7 7M8 2l-7 7" stroke="#fff" stroke-width="2" /><path d="M1 1l7 7M8 1l-7 7" stroke="#909090" stroke-width="2" /></svg></button>
      </div>
    </header>

    <nav class="menubar">
      <button v-for="m in menus" :key="m.join('')" type="button">{{ m[0] }}<u>{{ m[1] }}</u>{{ m[2] }}</button>
    </nav>

    <div v-for="bar in bars" :key="bar.name" class="toolbar" role="toolbar" :aria-label="bar.name">
      <template v-for="(t, i) in bar.items" :key="i">
        <span v-if="t.kind === 'grip'" class="grip"></span>
        <button v-else-if="t.kind === 'arrow'" type="button" class="drop" :aria-label="t.label">
          <svg width="9" height="8"><path d="M.5.5h8l-4 7z" :fill="t.off ? '#a8a8a8' : '#666'" :stroke="t.off ? '#979797' : '#444'" /></svg>
        </button>
        <button v-else type="button" class="tool" :class="{ active: t.active, wide: t.icon === 'pencils' }" :aria-label="t.label">
          <svg width="24" height="24"><use :href="'#' + t.icon" /></svg>
          <svg v-if="t.icon === 'pencils'" width="8" height="8"><path d="M.5.500h7l-3.500 7z" fill="#666" stroke="#444" /></svg>
        </button>
      </template>
      <button v-if="bar.name === 'Navigation'" type="button" class="more" aria-label="More tools">
        <svg width="9" height="8"><path d="M1 .5L4 4 1 7.500M5 .5L8 4 5 7.500" fill="none" stroke="#111" stroke-width="1.600" /></svg>
      </button>
    </div>

    <main>
      <aside class="dock">
        <div class="dockhead">
          <h2>Layers</h2>
          <button type="button" aria-label="Float panel"><svg width="11" height="11"><rect x=".5" y=".5" width="10" height="10" rx="1.500" fill="none" stroke="#666" /><path d="M4.500 4V2.500h4v4H7M2.500 4.500h4v4h-4z" fill="none" stroke="#555" /></svg></button>
          <button type="button" aria-label="Close panel"><svg width="11" height="11"><rect x=".5" y=".5" width="10" height="10" rx="1.500" fill="none" stroke="#666" /><path d="M3 3l5 5M8 3L3 8" stroke="#555" stroke-width="2" /></svg></button>
        </div>
        <ul class="tree">
          <li v-for="l in layers" :key="l.name">
            <div class="row" :class="{ current: l.current }">
              <button type="button" class="fold" aria-label="Collapse"><svg width="11" height="11"><rect x=".5" y=".5" width="10" height="10" rx="1" fill="#fcfcfc" stroke="#c4c4c4" /><path d="M3 5.500h5" stroke="#333" /></svg></button>
              <input :id="'lyr-' + l.name" v-model="l.on" type="checkbox" class="check" />
              <svg class="kind" :class="l.icon" width="18" height="18"><use :href="'#' + l.icon" /></svg>
              <label :for="'lyr-' + l.name" :class="l.icon">{{ l.name }}</label>
            </div>
            <div class="row legend">
              <svg width="16" height="2"><path d="M0 1.500h16" :stroke="l.color" /></svg>
              <span>{{ l.sub }}</span>
            </div>
          </li>
        </ul>
        <div class="tabs">
          <button type="button" class="tab on">Layers</button>
          <button type="button" class="tab">Browser</button>
        </div>
      </aside>
      <div class="splitter"><i></i><i></i><i></i></div>
      <section class="canvas" aria-label="Map">
        <svg viewBox="326 170 953 799" preserveAspectRatio="xMinYMin slice">
          <g fill="none" stroke="#ffff14">
            <polyline v-for="(p, i) in coastLines" :key="i" :points="p" />
          </g>
          <g fill="none" stroke="#25e563">
            <polyline v-for="(p, i) in islandLines" :key="i" :points="p" />
          </g>
        </svg>
      </section>
    </main>

    <footer class="status">
      <button type="button" class="mini" aria-label="Toggle extents and mouse position display">
        <svg width="16" height="16"><ellipse cx="6" cy="4.500" rx="4" ry="2.500" fill="#fff" stroke="#222" stroke-width="1.800" /><path d="M2 4l8 3M4 7.500l6 2.500M3 6v3" stroke="#222" stroke-width="1.800" /><circle cx="9" cy="10.500" r="4" fill="#ddd" stroke="#222" stroke-width="2" /><circle cx="10" cy="11" r="1.300" fill="#fff" stroke="#333" /><path d="M11 4l3-2" stroke="#666" /></svg>
      </button>
      <label for="coord" class="lcoord">Coordinate:</label>
      <input id="coord" v-model="coordinate" type="text" class="coord" />
      <label for="scale" class="lscale">Scale</label>
      <span class="combo">
        <select id="scale"><option>1:105677</option></select>
        <svg width="9" height="8"><path d="M.5.500h8l-4 7z" fill="#666" stroke="#444" /></svg>
      </span>
      <button type="button" class="mini" aria-label="Stop map rendering">
        <svg width="16" height="16"><path d="M14.500 2L7 11l-3 4.500 5-2.500 5.500-9z" fill="#777" stroke="#444" stroke-width=".8" /><circle cx="5.500" cy="5.500" r="4" fill="#fff" stroke="#d22" stroke-width="1.500" /><path d="M2.800 2.800l5.400 5.400" stroke="#d22" stroke-width="1.500" /></svg>
      </button>
      <input id="render" v-model="render" type="checkbox" class="check" />
      <label for="render" class="lrender">Render</label>
      <span class="epsg">EPSG:27700</span>
      <button type="button" class="mini" aria-label="Projection properties">
        <svg width="16" height="16"><circle cx="8" cy="8" r="6" fill="#ccc" stroke="#777" stroke-width="2" /><path d="M8 0v16M0 8h16" stroke="#777" stroke-width="1.500" /><circle cx="8" cy="8" r="3" fill="#ddd" stroke="#777" /></svg>
      </button>
    </footer>
  </div>
</template>

<style>
body {
  margin: 0;
}
</style>

<style scoped>
.window {
  display: flex;
  flex-direction: column;
  min-height: 100vh;
  box-sizing: border-box;
  background: #d6d6d6;
  color: #222;
  font-family: "DejaVu Sans", sans-serif;
  font-size: 12px;
  line-height: 16px;
  border-bottom: 2px solid #5c5c5c;
  overflow: hidden;
}
.sprite {
  position: absolute;
  width: 0;
  height: 0;
}
.tiny {
  font: bold 8px "DejaVu Sans", sans-serif;
}
.serif-i {
  font: italic bold 16px "Liberation Serif", serif;
}
.serif-t {
  font: bold 13px "Liberation Serif", serif;
}
.ask {
  font: bold 22px "Liberation Serif", serif;
}
button {
  border: 0;
  padding: 0;
  background: none;
  color: inherit;
  font: inherit;
  display: flex;
  align-items: center;
  justify-content: center;
}
svg {
  display: block;
  flex: none;
}
.titlebar {
  display: grid;
  grid-template-columns: 1fr 70px;
  align-items: center;
  height: 25px;
  box-sizing: border-box;
  border-top: 1px solid #f6f6f6;
  background: linear-gradient(#e2e2e2, #d6d6d6);
}
.titlebar h1 {
  margin: 0;
  font-size: 13px;
  line-height: 18px;
  text-align: center;
  color: #6c6c6c;
  text-shadow: 0 1px 0 #f0f0f0;
}
.winbtns {
  display: flex;
  justify-content: flex-end;
  padding-right: 2px;
}
.winbtns button {
  width: 23px;
  height: 20px;
}
.menubar {
  display: flex;
  justify-content: space-between;
  max-width: 638px;
  height: 24px;
  padding-left: 13px;
}
.menubar button {
  white-space: pre;
}
.menubar u {
  text-underline-offset: 2px;
}
.toolbar {
  display: flex;
  align-items: center;
  height: 40px;
  box-sizing: border-box;
  border-bottom: 1px solid #a4a4a4;
  background: linear-gradient(#d7d7d7, #e5e5e5);
}
.grip {
  flex: none;
  width: 8px;
  height: 36px;
  margin: 2px 1px 0 4px;
  background: repeating-conic-gradient(#fff 0 25%, transparent 0 50%) 0 0 / 2px 2px;
}
.grip:first-child {
  margin-left: 2px;
}
.tool {
  flex: none;
  width: 34px;
  height: 34px;
  margin: 0 1px;
  box-sizing: border-box;
}
.tool.wide {
  width: 40px;
}
.tool.wide svg + svg {
  margin: 4px 0 0;
}
.tool.active {
  border: 1px solid #5f5f5f;
  border-radius: 4px;
  background: linear-gradient(#979797, #bdbdbd);
  box-shadow: inset 0 0 2px #666;
}
.drop {
  flex: none;
  width: 20px;
  height: 34px;
}
.more {
  margin-left: auto;
  width: 15px;
  height: 34px;
}
main {
  display: flex;
  flex: 1;
  min-height: 400px;
}
.dock {
  display: flex;
  flex-direction: column;
  width: 319px;
  flex: none;
}
.dockhead {
  display: flex;
  align-items: center;
  gap: 6px;
  height: 25px;
  padding: 0 3px 0 2px;
}
.dockhead h2 {
  flex: 1;
  margin: 0;
  font: inherit;
}
.tree {
  flex: 1;
  margin: 0;
  padding: 1px 0 0;
  list-style: none;
  background: #fff;
  border: 1px solid #9c9c9c;
  border-bottom-width: 2px;
  color: #1a1a1a;
}
.row {
  display: flex;
  align-items: center;
  height: 20px;
  padding-left: 7px;
}
.row.current {
  background: linear-gradient(#a4c97f, #b3d494);
  box-shadow: inset 0 -1px #9bc06f;
  color: #fff;
}
.row .check {
  margin: 0 0 0 8px;
}
.kind {
  margin-left: 8px;
}
.row label,
.row span {
  margin-top: 2px;
}
.row label {
  margin-left: 5px;
  font-weight: bold;
}
.kind.pencil {
  margin-left: 9px;
  width: 20px;
  height: 20px;
}
.row label.pencil {
  margin-left: 6px;
}
.row.current label {
  text-decoration: underline;
  text-underline-offset: 2px;
}
.legend {
  padding-left: 43px;
  gap: 10px;
}
.check {
  appearance: none;
  flex: none;
  width: 14px;
  height: 14px;
  margin: 0;
  box-sizing: border-box;
  border: 1px solid #8a8a8a;
  border-radius: 3px;
  background: #fff;
  box-shadow: inset 0 0 1px #999;
}
.check:checked {
  border-color: #6b8c50;
  background:
    linear-gradient(45deg, transparent 38%, #34482a 38% 62%, transparent 62%) center / 6px 6px no-repeat,
    linear-gradient(-45deg, transparent 38%, #34482a 38% 62%, transparent 62%) center / 6px 6px no-repeat,
    linear-gradient(#fff, #fff) center / 8px 8px no-repeat,
    #a9d780;
}
.tabs {
  display: flex;
  align-items: flex-start;
  gap: 3px;
  height: 27px;
  padding-left: 2px;
}
.tab {
  height: 23px;
  padding: 1px 6px 0;
  border: 1px solid #bcbcbc;
  border-top: 0;
  border-radius: 0 0 3px 3px;
  background: linear-gradient(#dedede, #d0d0d0);
  box-shadow: inset 0 -1px #e8e8e8;
}
.tab.on {
  height: 25px;
  padding: 1px 5px 0;
  background: #fff;
  box-shadow: 0 1px 1px #aaa;
}
.splitter {
  display: flex;
  flex-direction: column;
  justify-content: center;
  align-items: center;
  gap: 1px;
  width: 6px;
  flex: none;
}
.splitter i {
  width: 4px;
  height: 1px;
  background: #9a9a9a;
  border-bottom: 1px solid #f0f0f0;
}
.canvas {
  flex: 1;
  min-width: 0;
  position: relative;
  background: #fff;
  border: 1px solid #9c9c9c;
}
.canvas svg {
  position: absolute;
  inset: 0;
  width: 100%;
  height: 100%;
}
.status {
  display: flex;
  align-items: center;
  justify-content: flex-end;
  height: 27px;
  padding-right: 2px;
}
.mini {
  width: 18px;
  height: 18px;
  flex: none;
  border: 1px solid #9b9b9b;
  border-radius: 3px;
  background: linear-gradient(#fafafa, #d5d5d5);
}
.lcoord {
  margin: 0 10px;
}
.coord {
  width: 298px;
  height: 19px;
  box-sizing: border-box;
  border: 1px solid #8f8f8f;
  border-radius: 4px;
  padding: 1px 0 0 1px;
  background: #fff;
  color: #1a1a1a;
  font: inherit;
  text-align: center;
  box-shadow: 0 1px #ececec;
}
.lscale {
  margin: 0 15px 0 10px;
}
.combo {
  display: flex;
  align-items: center;
  width: 98px;
  height: 19px;
  box-sizing: border-box;
  border: 1px solid #8f8f8f;
  border-radius: 4px;
  background: linear-gradient(90deg, #fff 71px, #aaa 71px 72px, #f0f0f0 72px);
}
.combo select {
  flex: 1;
  appearance: none;
  height: 17px;
  margin-right: -12px;
  padding: 0 0 0 4px;
  border: 0;
  background: none;
  color: #1a1a1a;
  font: inherit;
}
.combo svg {
  margin-right: 6px;
  pointer-events: none;
}
.status .mini:not(:first-child) {
  margin-left: 8px;
}
.status .check {
  margin-left: 10px;
}
.lrender {
  margin-left: 8px;
}
.epsg {
  margin: 0 2px 0 15px;
  color: #858585;
}
</style>
